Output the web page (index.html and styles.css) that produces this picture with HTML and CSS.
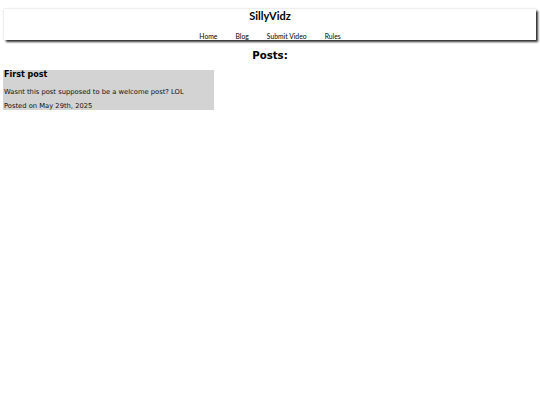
FILE: index.html
```html
<!DOCTYPE html>
<html>
<head>
<meta charset="utf-8">
<link rel="stylesheet" href="styles.css">
</head>
<body>
<header class="site-header">
  <div class="site-title">SillyVidz</div>
  <nav class="nav">
    <a href="#">Home</a>
    <a href="#">Blog</a>
    <a href="#">Submit Video</a>
    <a href="#">Rules</a>
  </nav>
</header>
<h2 class="posts-heading">Posts:</h2>
<div class="post">
  <h3 class="post-title">First post</h3>
  <p class="post-body">Wasnt this post supposed to be a welcome post? LOL</p>
  <p class="post-date">Posted on May 29th, 2025</p>
</div>
</body>
</html>
```
FILE: styles.css
```css
body {
  margin: 0;
  padding: 9px 4px 0 4px;
  font-family: "DejaVu Sans", Verdana, sans-serif;
  background: #fff;
  color: #000;
}
.site-header {
  background: #fff;
  box-shadow: 0 0 2px rgba(0,0,0,0.2), 2px 2px 2px #333;
  text-align: center;
  height: 31px;
  font-family: Lato, sans-serif;
}
.site-title {
  font-weight: bold;
  font-size: 11px;
  line-height: 14px;
}
.nav {
  display: flex;
  justify-content: center;
  gap: 18px;
  margin-top: 9px;
  font-size: 6.8px;
  line-height: 8px;
}
.nav a {
  color: #000;
  text-decoration: none;
}
.posts-heading {
  text-align: center;
  font-size: 10.2px;
  line-height: 12px;
  margin: 10px 0 8px 0;
}
.post {
  background: #d3d3d3;
  width: 210px;
  margin-left: -1px;
  padding: 0 0 0 1px;
}
.post-title {
  font-size: 8px;
  margin: 0;
  line-height: 10px;
}
.post-body,
.post-date {
  font-size: 6.75px;
  line-height: 8px;
  color: #111;
}
.post-body {
  margin: 8px 0 0 0;
}
.post-date {
  margin: 6px 0 0 0;
}
```
